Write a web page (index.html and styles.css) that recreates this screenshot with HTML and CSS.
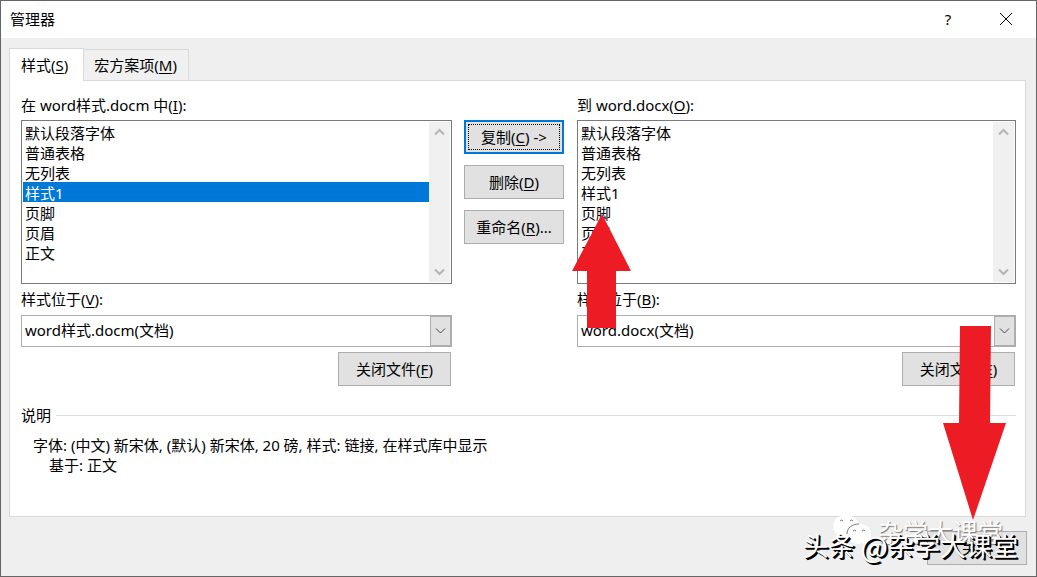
FILE: index.html
```html
<!DOCTYPE html>
<html lang="zh-CN">
<head>
<meta charset="UTF-8">
<meta name="viewport" content="width=device-width, initial-scale=1.0">
<title>管理器</title>
<link rel="stylesheet" href="styles.css">
</head>
<body>
<div class="dialog">
  <header class="title-bar">
    <h1>管理器</h1>
    <button class="title-btn" type="button" aria-label="帮助">?</button>
    <button class="title-btn" type="button" aria-label="关闭窗口">
      <svg width="14" height="14" viewBox="0 0 14 14"><path d="M1 1L13 13M13 1L1 13"/></svg>
    </button>
  </header>

  <main class="content">
    <div class="tabs" role="tablist">
      <button class="tab active" type="button" role="tab" aria-selected="true">样式(<u>S</u>)</button>
      <button class="tab" type="button" role="tab" aria-selected="false">宏方案项(<u>M</u>)</button>
    </div>

    <div class="panel">
      <div class="columns">
        <div class="file-side">
          <label for="from-list">在 word样式.docm 中(<u>I</u>):</label>
          <div class="list-box">
            <select id="from-list" size="8">
              <option>默认段落字体</option>
              <option>普通表格</option>
              <option>无列表</option>
              <option selected>样式1</option>
              <option>页脚</option>
              <option>页眉</option>
              <option>正文</option>
            </select>
            <div class="scrollbar">
              <svg width="11" height="8" viewBox="0 0 11 8"><path d="M1 6.5L5.5 2L10 6.5"/></svg>
              <svg width="11" height="8" viewBox="0 0 11 8"><path d="M1 1.5L5.5 6L10 1.5"/></svg>
            </div>
          </div>
          <label for="from-file">样式位于(<u>V</u>):</label>
          <div class="combo">
            <select id="from-file"><option>word样式.docm(文档)</option></select>
            <span class="combo-arrow"><svg width="11" height="8" viewBox="0 0 11 8"><path d="M1 1.5L5.5 6L10 1.5"/></svg></span>
          </div>
          <button class="btn close-file" type="button">关闭文件(<u>F</u>)</button>
        </div>

        <div class="actions">
          <button class="btn default" type="button"><span>复制(<u>C</u>) -&gt;</span></button>
          <button class="btn" type="button">删除(<u>D</u>)</button>
          <button class="btn" type="button">重命名(<u>R</u>)...</button>
        </div>

        <div class="file-side">
          <label for="to-list">到 word.docx(<u>O</u>):</label>
          <div class="list-box">
            <select id="to-list" size="8">
              <option>默认段落字体</option>
              <option>普通表格</option>
              <option>无列表</option>
              <option>样式1</option>
              <option>页脚</option>
              <option>页眉</option>
              <option>正文</option>
            </select>
            <div class="scrollbar">
              <svg width="11" height="8" viewBox="0 0 11 8"><path d="M1 6.5L5.5 2L10 6.5"/></svg>
              <svg width="11" height="8" viewBox="0 0 11 8"><path d="M1 1.5L5.5 6L10 1.5"/></svg>
            </div>
          </div>
          <label for="to-file">样式位于(<u>B</u>):</label>
          <div class="combo">
            <select id="to-file"><option>word.docx(文档)</option></select>
            <span class="combo-arrow"><svg width="11" height="8" viewBox="0 0 11 8"><path d="M1 1.5L5.5 6L10 1.5"/></svg></span>
          </div>
          <button class="btn close-file" type="button">关闭文件(<u>E</u>)</button>
        </div>
      </div>

      <section class="description">
        <h2>说明</h2>
        <p>字体: (中文) 新宋体, (默认) 新宋体, 20 磅, 样式: 链接, 在样式库中显示</p>
        <p class="based-on">基于: 正文</p>
      </section>
    </div>
  </main>

  <footer class="footer">
    <button class="btn" type="button">关闭</button>
  </footer>

  <!-- red arrows drawn over the dialog -->
  <svg class="arrow arrow-up" width="60" height="114" viewBox="0 0 60 114"><path d="M30 0L59 57H44V114H15V57H0Z"/></svg>
  <svg class="arrow arrow-down" width="64" height="194" viewBox="0 0 64 194"><path d="M17 0H48L47 97H63L30 194L0 97H16Z"/></svg>

  <!-- watermarks -->
  <div class="watermark wechat">
    <svg width="40" height="34" viewBox="0 0 40 34">
      <path class="bubble" d="M14 1C6 1 1 6 1 12C1 16 3 19 6 21L5 26L10 23C20 25 27 20 27 12C27 6 22 1 14 1Z"/>
      <path class="bubble" d="M27 10C20 10 15 14 15 20C15 26 20 30 27 30L30 29L35 32L34 28C37 26 39 23 39 20C39 14 34 10 27 10Z"/>
      <path class="edge" d="M15 20C15 14 20 10 27 10M8 7q2 -2 3 0M18 7q2 -2 3 0M21 17q2 -2 3 0M30 17q2 -2 3 0"/>
    </svg>
    <span>杂学大课堂</span>
  </div>
  <div class="watermark toutiao">头条 <span class="at">@</span>杂学大课堂</div>
</div>
</body>
</html>
```

FILE: styles.css
```css
* {
  box-sizing: border-box;
}

body {
  margin: 0;
  font-family: "Noto Sans", "Noto Sans CJK SC", sans-serif;
  font-size: 15px;
  line-height: 20px;
  color: #000;
}

button, select {
  font: inherit;
  color: inherit;
}

h1, h2, p {
  margin: 0;
  font-size: 15px;
  font-weight: normal;
}

u {
  text-underline-offset: 2px;
}

svg {
  display: block;
  fill: none;
}

.dialog {
  position: relative;
  display: flex;
  flex-direction: column;
  min-height: 100vh;
  border: 1px solid #666;
  background: #efefef;
  overflow: hidden;
}

/* title bar */
.title-bar {
  display: flex;
  align-items: center;
  height: 37px;
  padding: 0 1px 2px 9px;
  background: #fff;
}

.title-bar h1 {
  flex: 1;
}

.title-btn {
  display: flex;
  align-items: center;
  justify-content: center;
  width: 58px;
  height: 35px;
  padding: 0;
  border: none;
  background: none;
}

.title-btn svg {
  stroke: #000;
}

/* tabs */
.content {
  flex: 1;
  display: flex;
  flex-direction: column;
  padding: 10px 10px 0 8px;
}

.tabs {
  display: flex;
  align-items: flex-end;
}

.tab {
  height: 31px;
  padding: 0 11px 0 10px;
  border: 1px solid #d9d9d9;
  border-left: none;
  border-bottom: none;
  background: #f0f0f0;
}

.tab.active {
  z-index: 1;
  height: 33px;
  margin-bottom: -1px;
  padding: 0 15px 0 11px;
  border-left: 1px solid #d9d9d9;
  background: #fff;
}

.panel {
  flex: 1;
  padding: 14px 9px 14px 11px;
  border: 1px solid #d9d9d9;
  background: #fff;
}

.columns {
  display: grid;
  grid-template-columns: 431fr 101px 439fr;
  column-gap: 12px;
}

.file-side {
  display: flex;
  flex-direction: column;
}

/* list boxes */
.list-box {
  display: flex;
  height: 164px;
  margin: 5px 0;
  padding: 1px;
  border: 1px solid #7a7a7a;
}

.list-box select {
  flex: 1;
  min-width: 0;
  padding: 0;
  border: none;
  border-radius: 0;
  background: #fff;
  outline: none;
  overflow: hidden;
}

.list-box option {
  min-height: 20px;
  height: 20px;
  padding: 0 2px;
}

.list-box option:checked {
  background: #0078d7 linear-gradient(#0078d7, #0078d7);
  color: #fff;
  -webkit-text-fill-color: #fff;
}

.scrollbar {
  display: flex;
  flex-direction: column;
  justify-content: space-between;
  align-items: center;
  width: 21px;
  padding: 6px 1px 6px 0;
  background: #f0f0f0;
}

.scrollbar svg {
  stroke: #b4b4b4;
  stroke-width: 2;
}

/* drop-downs */
.combo {
  display: flex;
  height: 32px;
  margin: 6px 0 5px;
  border: 1px solid #adadad;
}

.combo select {
  flex: 1;
  min-width: 0;
  padding: 0 3px 2px;
  border: none;
  background: #fff;
  appearance: none;
}

.combo-arrow {
  display: flex;
  align-items: center;
  justify-content: center;
  width: 21px;
  border: 1px solid #adadad;
  background: #e1e1e1;
}

.combo-arrow svg {
  stroke: #444;
}

/* buttons */
.btn {
  width: 100px;
  height: 34px;
  padding: 0;
  border: 1px solid #adadad;
  background: #e1e1e1;
}

.btn.default {
  padding: 2px;
  border: 2px solid #0078d7;
}

.btn.default span {
  display: flex;
  align-items: center;
  justify-content: center;
  height: 100%;
  border: 1px dotted #000;
  white-space: pre;
}

.close-file {
  align-self: flex-end;
  width: 113px;
  margin-right: 1px;
}

.actions {
  display: flex;
  flex-direction: column;
  gap: 11px;
  padding-top: 25px;
}

/* description */
.description {
  margin-top: 19px;
}

.description h2 {
  display: flex;
  align-items: center;
  gap: 5px;
  margin-bottom: 10px;
}

.description h2::after {
  content: "";
  flex: 1;
  height: 1px;
  background: #dcdcdc;
}

.description p {
  padding-left: 12px;
}

.description .based-on {
  padding-left: 28px;
}

.footer {
  display: flex;
  justify-content: flex-end;
  padding: 14px 9px 11px;
}

/* overlays */
.arrow {
  position: absolute;
  fill: #ed1c24;
}

.arrow-up {
  left: 571px;
  top: 213px;
}

.arrow-down {
  right: 29px;
  top: 325px;
}

.watermark {
  position: absolute;
  display: flex;
  align-items: center;
  font-family: "Noto Sans CJK SC", sans-serif;
  color: #fff;
  white-space: pre;
}

.wechat {
  right: 33px;
  bottom: 28px;
  gap: 6px;
  font-size: 25px;
  line-height: 34px;
  text-shadow: 1px 1px 1px #777;
}

.wechat .bubble {
  fill: #fff;
}

.wechat .edge {
  stroke: #777;
}

.toutiao {
  right: 18px;
  bottom: 14px;
  font-size: 26px;
  line-height: 34px;
  text-shadow: 1px 1px 0 #000, 2px 2px 0 #000;
}

.toutiao .at {
  font-size: 29px;
}
```
